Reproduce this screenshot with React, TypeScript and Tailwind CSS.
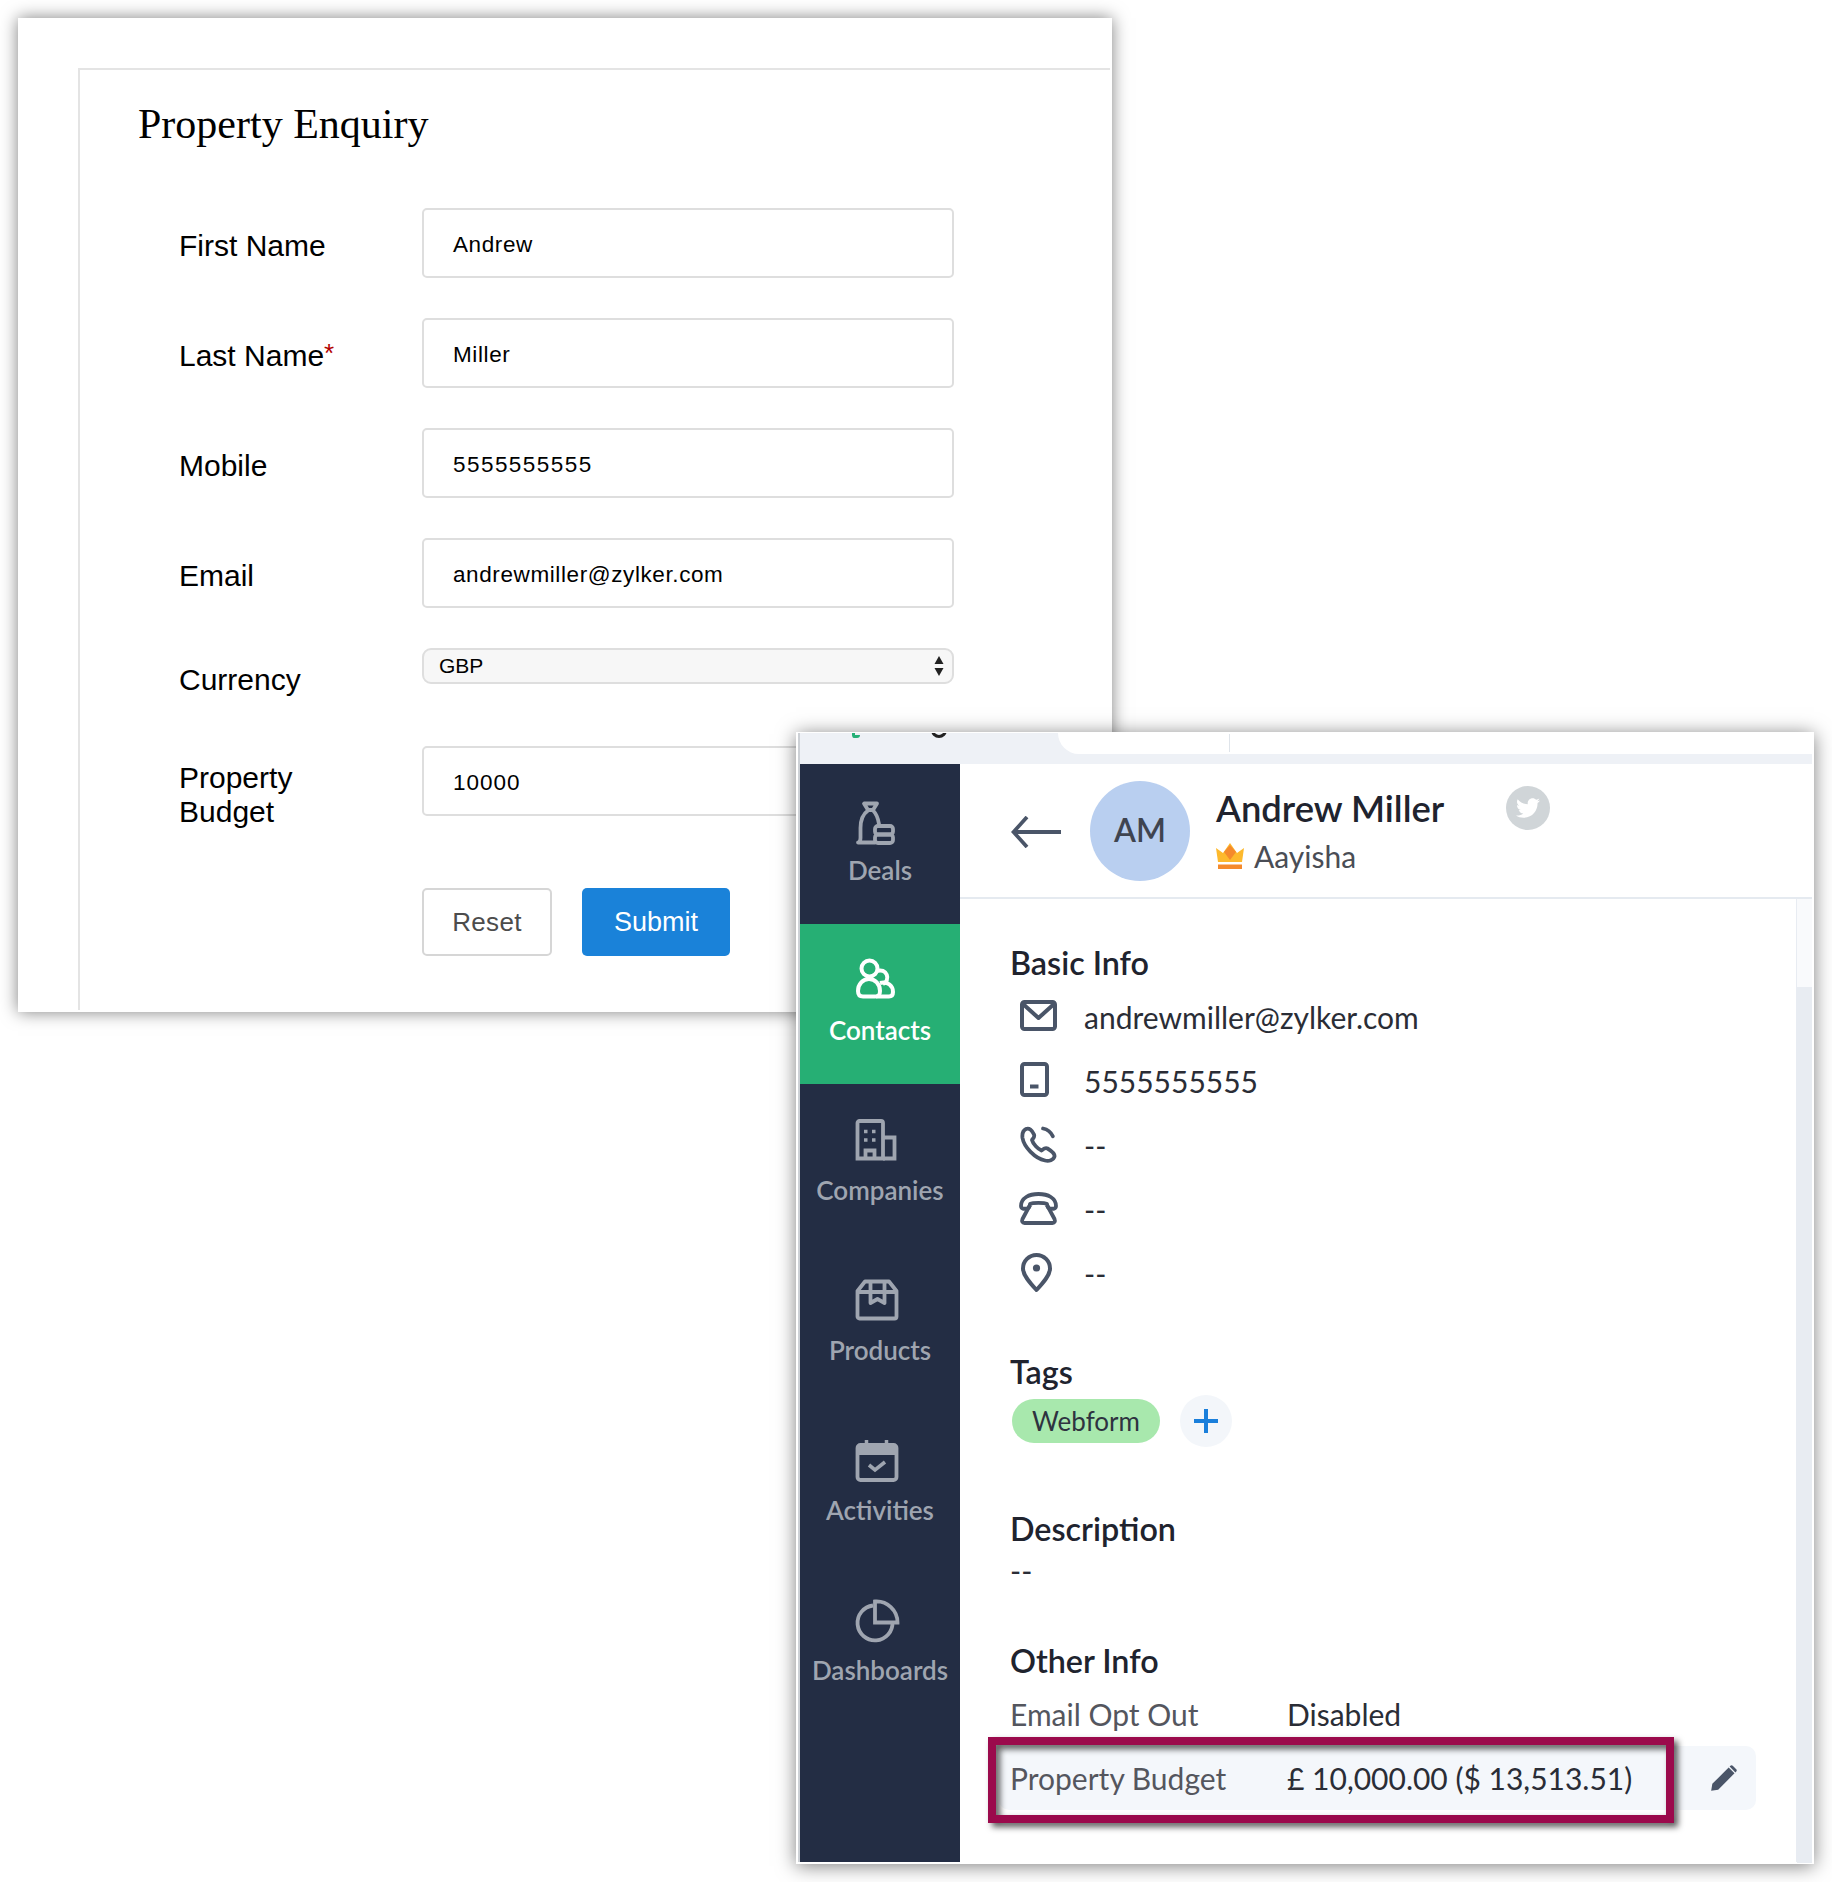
import { FaTwitter } from "react-icons/fa";

const FIELDS_TOP = [
  { label: "First Name", value: "Andrew", mt: "mt-0" },
  { label: "Last Name", value: "Miller", required: true, mt: "mt-[40px]" },
  { label: "Mobile", value: "5555555555", mt: "mt-[40px]", spacing: "tracking-[1.45px]" },
  { label: "Email", value: "andrewmiller@zylker.com", mt: "mt-[40px]" },
];

function TextBox({ value, spacing = "tracking-[0.6px]" }: { value: string; spacing?: string }) {
  return (
    <div className={`flex h-[70px] w-[532px] items-center rounded-[5px] border-2 border-[#dedede] bg-white pl-[29px] pt-[3px] text-[22.5px] text-black ${spacing}`}>
      {value}
    </div>
  );
}

function EnquiryForm() {
  return (
    <div className="absolute left-[18px] top-[18px] h-[994px] w-[1094px] bg-white pl-[60px] pt-[50px] font-['Liberation_Sans',sans-serif] shadow-[0_0_16px_rgba(0,0,0,0.5)]">
      <div className="h-[942px] w-[1032px] border-l-2 border-t-2 border-[#e4e4e4] pl-[59px]">
        <h1 className="-ml-[1px] mt-[29px] font-['Liberation_Serif',serif] text-[42px] leading-[50px] text-black">Property Enquiry</h1>
        <div className="mt-[59px]">
          {FIELDS_TOP.map((f) => (
            <div key={f.label} className={`flex ${f.mt}`}>
              <div className="w-[283px] pl-[40px] pt-[20px] text-[30px] leading-[36px] text-black">
                {f.label}
                {f.required && <span className="relative -top-[4px] text-[26px] text-[#b30000]">*</span>}
              </div>
              <TextBox value={f.value} spacing={f.spacing} />
            </div>
          ))}
          <div className="mt-[40px] flex">
            <div className="w-[283px] pl-[40px] pt-[14px] text-[30px] leading-[36px] text-black">Currency</div>
            <div className="flex h-[36px] w-[532px] items-center justify-between rounded-[9px] border-2 border-[#dedede] bg-[#f7f7f7] pl-[15px] pr-[8px] text-[21px] text-black">
              GBP
              <svg width="10" height="20" viewBox="0 0 10 20" className="fill-[#222]">
                <path d="M5 0 L9.5 8 H0.5 Z M5 20 L9.5 12 H0.5 Z" />
              </svg>
            </div>
          </div>
          <div className="mt-[48px] flex">
            <div className="w-[283px] pl-[40px] pt-[15px] text-[30px] leading-[34px] text-black">
              Property
              <br />
              Budget
            </div>
            <TextBox value="10000" spacing="tracking-[1px]" />
          </div>
          <div className="mt-[59px] flex gap-[30px] pl-[283px]">
            <div className="flex h-[68px] w-[130px] items-center justify-center rounded-[5px] border-2 border-[#d6d6d6] bg-white text-[26px] tracking-[0.3px] text-[#4c4c4c]">
              Reset
            </div>
            <div className="flex h-[68px] w-[148px] items-center justify-center rounded-[5px] bg-[#1a82d9] text-[27px] text-white">
              Submit
            </div>
          </div>
        </div>
      </div>
    </div>
  );
}

function DealsIcon() {
  return (
    <svg width="44" height="44" viewBox="0 0 44 44" fill="none" strokeWidth="3.8" strokeLinejoin="round" strokeLinecap="round" className="overflow-visible stroke-[#9fa5b0]">
      <path d="M8 1.5 H21 L17 8 H12 Z" />
      <path d="M12 8.5 C7 12 4.5 19 4.5 26 V36 C4.5 38 4 40 2 40.5 H19" />
      <path d="M17.5 9 C20.5 12 22 16 23 22" />
      <rect x="19" y="24" width="18" height="8.5" rx="3" />
      <rect x="19" y="32.5" width="18" height="8.5" rx="3" />
    </svg>
  );
}

function ContactsIcon() {
  return (
    <svg width="44" height="44" viewBox="0 0 44 44" fill="none" strokeWidth="4" strokeLinejoin="round" className="overflow-visible stroke-white">
      <circle cx="13.5" cy="6.5" r="8" />
      <path d="M21.5 9 A6.8 6.8 0 1 1 27 22" />
      <path d="M2 29 C2 22 7 17 13 17 C19 17 24 22 24 29 C24 33.5 22 34.5 19 34.5 H7 C4 34.5 2 33 2 29 Z" />
      <path d="M24 21 C32 19 37 24 37 30 C37 33.5 35.5 34.5 33 34.5 H20" />
    </svg>
  );
}

function CompaniesIcon() {
  return (
    <svg width="44" height="44" viewBox="0 0 44 44" fill="none" strokeWidth="3.8" className="overflow-visible stroke-[#9fa5b0]">
      <path d="M1.5 36.5 V1 a2 2 0 0 1 2-2 H25 a2 2 0 0 1 2 2 V36.5 Z" />
      <path d="M27 15.5 H38.5 V36.5 H27" />
      <path d="M9.5 36.5 V28.5 H18.5 V36.5" />
      <path d="M8 9.5 H11.5 M16 9.5 H19.5 M8 18 H11.5 M16 18 H19.5" strokeWidth="3.5" />
    </svg>
  );
}

function ProductsIcon() {
  return (
    <svg width="44" height="44" viewBox="0 0 44 44" fill="none" strokeWidth="3.8" strokeLinejoin="round" className="overflow-visible stroke-[#9fa5b0]">
      <path d="M9 -0.5 H33 L40.5 9 V34.5 a2 2 0 0 1-2 2 H3.5 a2 2 0 0 1-2-2 V9 Z" />
      <path d="M1.5 10 H40.5" />
      <path d="M14.5 -0.5 V21 L21.5 17 L28.5 21 V-0.5" />
    </svg>
  );
}

function ActivitiesIcon() {
  return (
    <svg width="44" height="44" viewBox="0 0 44 44" fill="none" strokeWidth="3.8" className="overflow-visible stroke-[#9fa5b0]">
      <rect x="1.5" y="3" width="39" height="35" rx="3" />
      <path d="M1.5 8 H40.5" strokeWidth="10" />
      <path d="M10.5 -2 V4 M30.5 -2 V4" strokeWidth="3.5" />
      <path d="M13 23 L19 28 L29 20" strokeWidth="3.6" />
    </svg>
  );
}

function DashboardsIcon() {
  return (
    <svg width="44" height="44" viewBox="0 0 44 44" fill="none" strokeWidth="3.8" className="ml-[1px] overflow-visible stroke-[#9fa5b0]">
      <path d="M16 3.5 A17.5 17.5 0 1 0 35.5 20" />
      <path d="M18 -0.5 A21 21 0 0 1 40.5 20.5 H18 Z" strokeLinejoin="miter" />
    </svg>
  );
}

const NAV = [
  { label: "Deals", Icon: DealsIcon },
  { label: "Contacts", Icon: ContactsIcon, active: true },
  { label: "Companies", Icon: CompaniesIcon },
  { label: "Products", Icon: ProductsIcon },
  { label: "Activities", Icon: ActivitiesIcon },
  { label: "Dashboards", Icon: DashboardsIcon },
];

function MailIcon() {
  return (
    <svg width="38" height="32" viewBox="0 0 38 32" fill="none" strokeWidth="4" strokeLinejoin="round" className="-mt-[3px] stroke-[#4a5568]">
      <rect x="2" y="2" width="33" height="27" rx="2.5" />
      <path d="M3 4 L18.5 18 L34 4" />
    </svg>
  );
}

function TabletIcon() {
  return (
    <svg width="38" height="38" viewBox="0 0 38 38" fill="none" strokeWidth="4" className="stroke-[#4a5568]">
      <rect x="2" y="2" width="25" height="31" rx="2.5" />
      <path d="M10 24.5 H18.5" />
    </svg>
  );
}

function PhoneIcon() {
  return (
    <svg width="38" height="38" viewBox="0 0 38 38" fill="none" strokeWidth="3.8" strokeLinejoin="round" strokeLinecap="round" className="stroke-[#4a5568]">
      <path d="M6 3 C9 1.5 12 4 14 8.5 C15 11 13 12.5 12 14 C13 18 18 23 21.5 24.5 C23 23.5 25 21 27.5 22.5 C31.5 25 35 28 34.5 30.5 C33.5 34 29 35.5 25 34.5 C15 32.5 4 21 2.5 12 C2 8 3 4.5 6 3 Z" />
      <path d="M23 2.5 C28.5 3.5 33 8 34 14" strokeDasharray="13 20" />
    </svg>
  );
}

function LandlineIcon() {
  return (
    <svg width="40" height="34" viewBox="0 0 40 34" fill="none" strokeWidth="3.8" strokeLinejoin="round" className="stroke-[#4a5568]">
      <path d="M2 14 C2 6 10 2 19.5 2 C29 2 37 6 37 14 C37 17 34 17 31 16.5 C28.5 16 28 14.5 28 12 C25 10.5 14 10.5 11 12 C11 14.5 10.5 16 8 16.5 C5 17 2 17 2 14 Z" />
      <path d="M11 13 L3.5 27 C2.5 29.5 3.5 31 5.5 31 H33.5 C35.5 31 36.5 29.5 35.5 27 L28 13" />
    </svg>
  );
}

function PinIcon() {
  return (
    <svg width="34" height="40" viewBox="0 0 34 40" fill="none" strokeWidth="4" strokeLinejoin="round" className="stroke-[#4a5568]">
      <path d="M15.5 37 C8 29 2 22 2 15.5 C2 8 8 2 15.5 2 C23 2 29 8 29 15.5 C29 22 23 29 15.5 37 Z" />
      <circle cx="15.5" cy="15" r="3.6" className="fill-[#4a5568] stroke-none" />
    </svg>
  );
}

function Heading({ children, mt }: { children: string; mt: string }) {
  return <h2 className={`${mt} text-[32.3px] font-semibold leading-[40px] text-[#20232e]`}>{children}</h2>;
}

const CONTACT_ROWS = [
  { Icon: MailIcon, value: "andrewmiller@zylker.com", pos: "pl-[10px]" },
  { Icon: TabletIcon, value: "5555555555", pos: "pl-[10px]" },
  { Icon: PhoneIcon, value: "--", pos: "pl-[10px]" },
  { Icon: LandlineIcon, value: "--", pos: "pl-[9px]" },
  { Icon: PinIcon, value: "--", pos: "pl-[11px]" },
];

function CrmPanel() {
  return (
    <div className="absolute left-[796px] top-[732px] h-[1132px] w-[1018px] bg-white pb-[2px] pl-[2px] pr-[2px] pt-[1px] font-[Lato,sans-serif] shadow-[0_2px_18px_rgba(0,0,0,0.5)]">
      <div className="flex h-full flex-col border-l-2 border-[#cdd1d6]">
        {/* browser tab strip, cut off at the top */}
        <div className="relative h-[31px] shrink-0 overflow-hidden bg-[#eef1f6]">
          <div className="ml-[258px] h-[21px] rounded-bl-[30px] bg-white" />
          <div className="absolute left-[429px] top-[1px] h-[18px] w-px bg-[#dfe4ea]" />
          <div className="absolute left-[52px] -top-[3px] h-[8px] w-[8px] rounded-b-[3px] border-b-[3px] border-l-[3px] border-[#25b076]" />
          <div className="absolute left-[131px] -top-[11px] h-[16px] w-[16px] rounded-full border-[3px] border-[#222]" />
        </div>
        <div className="flex min-h-0 flex-1">
          <nav className="w-[160px] shrink-0 bg-[#232d44]">
            {NAV.map(({ label, Icon, active }) => (
              <div key={label} className={`h-[160px] pt-[38px] ${active ? "bg-[#26af74]" : ""}`}>
                <div className="ml-[56px] h-[44px] w-[44px]">
                  <Icon />
                </div>
                <div className={`mt-[6px] text-center text-[26px] font-semibold leading-[36px] ${active ? "text-white" : "text-[#9fa5b0]"}`}>
                  {label}
                </div>
              </div>
            ))}
          </nav>
          <div className="flex min-w-0 flex-1 flex-col">
            <header className="relative flex h-[135px] shrink-0 items-center border-b-2 border-[#e5eaf0] pl-[51px]">
              <svg width="50" height="32" viewBox="0 0 50 32" fill="none" strokeWidth="3.8" className="mt-[2px] stroke-[#4a5568]">
                <path d="M50 16 H3 M16 1 L2.5 16 L16 31" />
              </svg>
              <div className="ml-[29px] flex h-[100px] w-[100px] shrink-0 items-center justify-center rounded-full bg-[#b9cff0] pb-[1px] text-[32px] font-semibold text-[#3f4450]">
                AM
              </div>
              <div className="ml-[26px]">
                <div className="text-[36.4px] font-semibold leading-[44px] text-[#20232e]">Andrew Miller</div>
                <div className="mt-[7px] flex items-center gap-[10px] text-[30px] leading-[38px] text-[#4a4d55]">
                  <svg width="28" height="26" viewBox="0 0 28 26">
                    <path d="M0 5 L7 10 L14 0 L21 10 L28 5 L26 19 H2 Z" fill="#fdb92d" />
                    <path d="M14 2 L20 9 L14 17 L8 9 Z" fill="#f58a2c" />
                    <rect x="2" y="21.5" width="24" height="4.5" fill="#f58a2c" />
                  </svg>
                  Aayisha
                </div>
              </div>
              <div className="absolute left-[546px] top-[22px] flex h-[44px] w-[44px] items-center justify-center rounded-full bg-[#d0d5d8] text-white">
                <FaTwitter className="h-[24px] w-[24px]" />
              </div>
            </header>
            <div className="flex min-h-0 flex-1">
              <main className="min-w-0 flex-1 pl-[50px] text-[#2a2d36]">
                <Heading mt="mt-[44px]">Basic Info</Heading>
                <div className="mt-[2px]">
                  {CONTACT_ROWS.map(({ Icon, value, pos }, i) => (
                    <div key={i} className="flex h-[64px] items-center">
                      <div className={`flex w-[74px] shrink-0 ${pos}`}>
                        <Icon />
                      </div>
                      <span className="text-[30px] leading-none">{value}</span>
                    </div>
                  ))}
                </div>
                <Heading mt="mt-[47px]">Tags</Heading>
                <div className="mt-[4px] flex h-[50px] items-center pl-[2px]">
                  <div className="flex h-[44px] w-[148px] items-center justify-center rounded-full bg-[#a8e8ad] text-[26px] text-[#2e3340]">
                    Webform
                  </div>
                  <div className="ml-[20px] flex h-[52px] w-[52px] items-center justify-center rounded-full bg-[#f3f6fa]">
                    <svg width="24" height="24" viewBox="0 0 24 24" className="stroke-[#1a7fdb]" strokeWidth="4">
                      <path d="M12 0 V24 M0 12 H24" />
                    </svg>
                  </div>
                </div>
                <Heading mt="mt-[63px]">Description</Heading>
                <div className="mt-[1px] text-[30px] leading-[40px]">--</div>
                <Heading mt="mt-[51px]">Other Info</Heading>
                <div className="mt-[3px] flex h-[60px] items-center text-[30px]">
                  <span className="w-[277px] text-[#54565e]">Email Opt Out</span>
                  <span>Disabled</span>
                </div>
                <div className="relative -ml-[11px] mt-[2px] flex h-[64px] w-[757px] items-center rounded-[10px] bg-[#f4f7fb] pl-[11px] text-[30px]">
                  <span className="w-[277px] text-[#54565e]">Property Budget</span>
                  <span>£ 10,000.00 ($ 13,513.51)</span>
                  <svg width="28" height="28" viewBox="0 0 24 24" className="absolute right-[18px] top-[18px] fill-[#4a5568]">
                    <path d="M1 23 L2 17 L16 3 L21 8 L7 22 Z M17.5 1.5 a1.5 1.5 0 0 1 2 0 L22.5 4.5 a1.5 1.5 0 0 1 0 2 L21.8 7.2 L16.8 2.2 Z" />
                  </svg>
                  {/* annotation frame drawn on top of the screenshot */}
                  <div className="pointer-events-none absolute -left-[11px] -top-[9px] h-[86px] w-[686px] border-8 border-[#9b0a4c] drop-shadow-[4px_4px_3px_rgba(0,0,0,0.65)]" />
                </div>
              </main>
              <div className="w-[16px] shrink-0 border-l border-[#e8ecf2] bg-[#f9fafc]">
                <div className="mt-[88px] h-[876px] bg-[#e8ecf2]" />
              </div>
            </div>
          </div>
        </div>
      </div>
    </div>
  );
}

export default function App() {
  return (
    <div className="relative h-[1882px] w-[1832px] overflow-hidden bg-white">
      <EnquiryForm />
      <CrmPanel />
    </div>
  );
}
